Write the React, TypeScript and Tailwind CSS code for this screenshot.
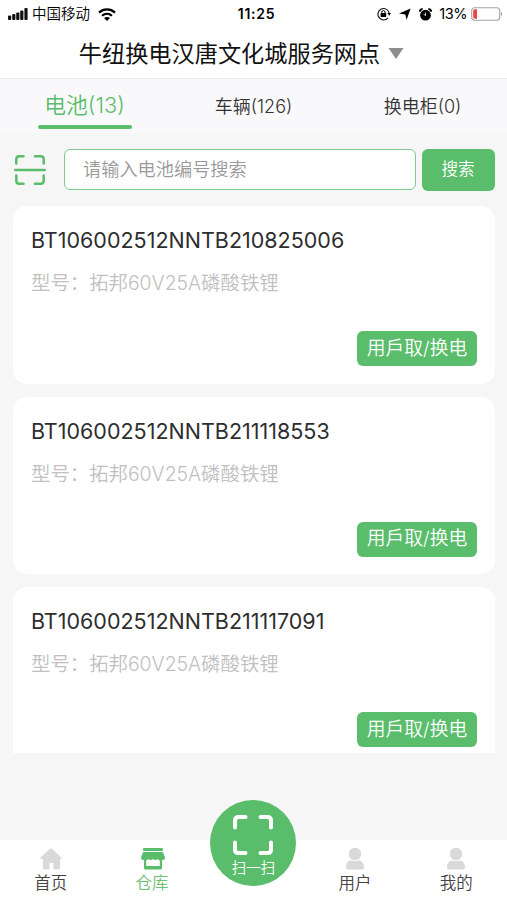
import React, { useState } from "react";

interface IBattery {
  id: string;
  model: string;
}

const batteries: IBattery[] = [
  { id: "BT106002512NNTB210825006", model: "拓邦60V25A磷酸铁锂" },
  { id: "BT106002512NNTB211118553", model: "拓邦60V25A磷酸铁锂" },
  { id: "BT106002512NNTB211117091", model: "拓邦60V25A磷酸铁锂" },
];

const StatusBar: React.FC = () => {
  return (
    <div className="h-7 shrink-0 grid grid-cols-3 items-center text-black text-sm leading-none">
      <div className="flex items-center pl-2">
        <svg width="20" height="12" viewBox="0 0 20 12" fill="#111">
          <rect x="0" y="7.5" width="3.2" height="4.5" rx="1" />
          <rect x="4.2" y="6" width="3.2" height="6" rx="1" />
          <rect x="8.2" y="4.5" width="3.2" height="7.5" rx="1" />
          <rect x="12.2" y="2.5" width="3.2" height="9.5" rx="1" />
          <rect x="16.4" y="0" width="3.2" height="12" rx="1" />
        </svg>
        <span className="ml-1 text-[14.5px] font-[350]">中国移动</span>
        <svg className="ml-2" width="18" height="13" viewBox="0 0 18 13">
          <path d="M1 4.6C5.6.4 12.4.4 17 4.6" fill="none" stroke="#000" strokeWidth="2.3" />
          <path d="M4 7.8c2.9-2.6 7.1-2.6 10 0" fill="none" stroke="#000" strokeWidth="2.2" />
          <path d="M9 13 6 10c1.7-1.5 4.3-1.5 6 0z" />
        </svg>
      </div>
      <div className="flex justify-center pl-1.5 font-semibold tracking-[0.7px]">11:25</div>
      <div className="flex items-center justify-end pr-1">
        <svg width="14" height="14" viewBox="0 0 14 14">
          <path d="M12.2 6A5.700 5.700 0 1 0 11 10.900" fill="none" stroke="#111" strokeWidth="1.1" />
          <path d="M10.4 6h3.6l-1.8 2.7z" />
          <rect x="3.6" y="6" width="5.6" height="4" rx=".5" />
          <path d="M4.8 6.4V5.2a1.6 1.6 0 0 1 3.2 0v1.2" fill="none" stroke="#000" strokeWidth="1" />
        </svg>
        <svg className="ml-2" width="12" height="12" viewBox="0 0 12 12">
          <path d="M11.6.4 7.600 11.800 6.300 6.400 0 5.600z" />
        </svg>
        <svg className="ml-2" width="13" height="13" viewBox="0 0 13 13">
          <circle cx="6.5" cy="7.2" r="5.4" />
          <path d="M.8 3.8A3 3 0 0 1 3.6 1M12.2 3.8A3 3 0 0 0 9.4 1" fill="none" stroke="#000" strokeWidth="2" />
          <path d="M6.5 4.500v3L4.600 6.200" fill="none" stroke="#fff" strokeWidth=".8" />
        </svg>
        <span className="ml-[7px] text-[14.6px] tracking-[-0.5px]">13%</span>
        <svg className="ml-1" width="32" height="14" viewBox="0 0 32 14">
          <rect x=".7" y=".7" width="28" height="12.6" rx="3" fill="#fff" stroke="#a3a3a3" strokeWidth="1.1" />
          <path d="M2.2 4a1.8 1.8 0 0 1 1.800-1.800h2v9.600H4A1.800 1.800 0 0 1 2.200 10z" fill="#f0443c" />
          <path d="M30 5c1.6.6 1.6 3.4 0 4z" fill="#999" />
        </svg>
      </div>
    </div>
  );
};

const ScanIcon: React.FC = () => {
  return (
    <svg width="32" height="30" viewBox="0 0 32 30" fill="none" stroke="#5abd6b" strokeWidth="2.5" strokeLinecap="round">
      <path d="M2.3 8.5V4.3q0-3 3-3h4.2M21 1.3h5.7q3 0 3 3v4.2M29.7 20.5v5.2q0 3-3 3H21M9.5 28.7H5.3q-3 0-3-3v-5.2" />
      <path d="M1.3 15h29.4" />
    </svg>
  );
};

const BatteryCard: React.FC<{ battery: IBattery }> = ({ battery }) => {
  return (
    <div className="h-[177.5px] shrink-0 bg-white rounded-[14px] px-[18px] flex flex-col">
      <p className="mt-[18px] leading-8 text-[21.5px] text-[#2e2e2e] whitespace-nowrap">
        {battery.id}
      </p>
      <p className="mt-3 leading-[30px] text-[19.4px] font-[350] text-[#c0c0c0] whitespace-nowrap">
        型号：{battery.model}
      </p>
      <div className="flex justify-end mt-[33px]">
        <button className="w-[120px] h-[35px] pt-px rounded-md bg-[#5abd6b] text-white text-[18.8px] font-[350] leading-none whitespace-nowrap">
          用戶取/换电
        </button>
      </div>
    </div>
  );
};

const UserIcon: React.FC = () => {
  return (
    <svg width="20" height="22" viewBox="0 0 20 22" fill="#d9d9d9">
      <circle cx="10" cy="6" r="6.2" />
      <path d="M1 19c0-4 2.500-6.500 5.500-6.500q3.500 1.500 7 0c3 0 5.500 2.500 5.500 6.500 0 2-1 2.500-3 2.500H4c-2 0-3-.5-3-2.500z" />
    </svg>
  );
};

const BottomBar: React.FC = () => {
  return (
    <div className="h-[60px] shrink-0 bg-white grid grid-cols-5 text-[16.5px] font-[350] leading-6 text-[#444]">
      <div className="flex flex-col items-center pt-2">
        <svg width="22" height="22" viewBox="0 0 22 22" fill="#d9d9d9">
          <path d="M10 .8q1-.8 2 0l9.4 8.7q.8 1.5-1 1.5H20v9q0 1.5-1.500 1.500H13.500V15h-4v6.500h-5Q3 21.500 3 20v-9H1.500q-1.800 0-1-1.500z" />
        </svg>
        <span className="mt-px">首页</span>
      </div>
      <div className="flex flex-col items-center pt-2 text-[#6cbf73]">
        <svg className="ml-0.5" width="24" height="22" viewBox="0 0 24 22" fill="#5abd6b">
          <rect x="2" y="0" width="20" height="3" rx="1" />
          <path d="M3 4h18q1 0 1.300 1L24 9.500q0 2.500-3 2.700V20q0 1.500-1.500 1.500h-15Q3 21.500 3 20v-7.800Q0 12 0 9.500L1.700 5Q2 4 3 4zM5.200 12.200v5.800h13.600v-5.800q-1.300 0-2.300-1.200-2 2.200-4.500 0-2.500 2.200-4.500 0-1 1.200-2.300 1.200z" />
        </svg>
        <span className="mt-px">仓库</span>
      </div>
      <div className="relative">
        <div className="absolute left-1/2 -translate-x-1/2 -top-10 w-[86px] h-[86px] rounded-full bg-[#5abd6b] text-white flex flex-col items-center">
          <svg className="mt-3.5" width="42" height="42" viewBox="0 0 42 42" fill="none" stroke="#fff" strokeWidth="4" strokeLinecap="round">
            <path d="M3 13.5V6.5q0-3.5 3.5-3.5h7M28.5 3h7q3.5 0 3.5 3.5v7M39 28.5v7q0 3.5-3.5 3.5h-7M13.5 39h-7q-3.5 0-3.5-3.5v-7" />
          </svg>
          <span className="mt-0.5 text-[14.5px] leading-5 whitespace-nowrap">扫一扫</span>
        </div>
      </div>
      <div className="flex flex-col items-center pt-2">
        <UserIcon />
        <span className="mt-px">用户</span>
      </div>
      <div className="flex flex-col items-center pt-2">
        <UserIcon />
        <span className="mt-px">我的</span>
      </div>
    </div>
  );
};

const App: React.FC = () => {
  const [search, setSearch] = useState("");

  return (
    <div className="w-full h-[900px] overflow-hidden flex flex-col bg-white font-['Inter','Noto_Sans_CJK_SC',sans-serif]">
      <StatusBar />
      <div className="h-[51px] shrink-0 flex items-center justify-center border-b border-[#ededed] pt-px pr-6">
        <p className="text-[23.2px] leading-8 text-[#111] whitespace-nowrap">牛纽换电汉唐文化城服务网点</p>
        <svg className="ml-2" width="16" height="11" viewBox="0 0 16 11" fill="#8c8c8c">
          <path d="M.5 0h15L8 11z" />
        </svg>
      </div>
      <div className="h-[54px] shrink-0 bg-[#f9f9fb] grid grid-cols-3 text-lg font-[350] text-[#333]">
        <div className="flex flex-col items-center text-[#5abd6b] pt-2.5">
          <p className="text-[21.8px] leading-8">电池(13)</p>
          <div className="mt-1 w-[94px] h-[3.5px] rounded-full bg-[#5abd6b]" />
        </div>
        <div className="flex justify-center items-center pt-px">车辆(126)</div>
        <div className="flex justify-center items-center pt-px">换电柜(0)</div>
      </div>
      <div className="flex-1 min-h-0 bg-[#f6f6f6] flex flex-col">
        <div className="h-[73px] shrink-0 flex items-center pl-3.5 pr-3">
          <ScanIcon />
          <input
            className="ml-[18px] w-[352px] h-[41px] rounded-md border-[1.5px] border-[#7fcb8d] bg-white px-[18px] pb-0.5 text-[18.2px] font-[350] placeholder:text-[#999] outline-none"
            placeholder="请输入电池编号搜索"
            value={search}
            onChange={(e) => setSearch(e.target.value)}
          />
          <button className="ml-1.5 w-[73px] h-[42px] pr-px rounded-md bg-[#5abd6b] text-white text-[16.5px] font-[350]">
            搜索
          </button>
        </div>
        <div className="h-[547px] shrink-0 overflow-hidden flex flex-col gap-[13px] pl-[13px] pr-3">
          {batteries.map((battery) => (
            <BatteryCard key={battery.id} battery={battery} />
          ))}
        </div>
      </div>
      <BottomBar />
    </div>
  );
};

export default App;
